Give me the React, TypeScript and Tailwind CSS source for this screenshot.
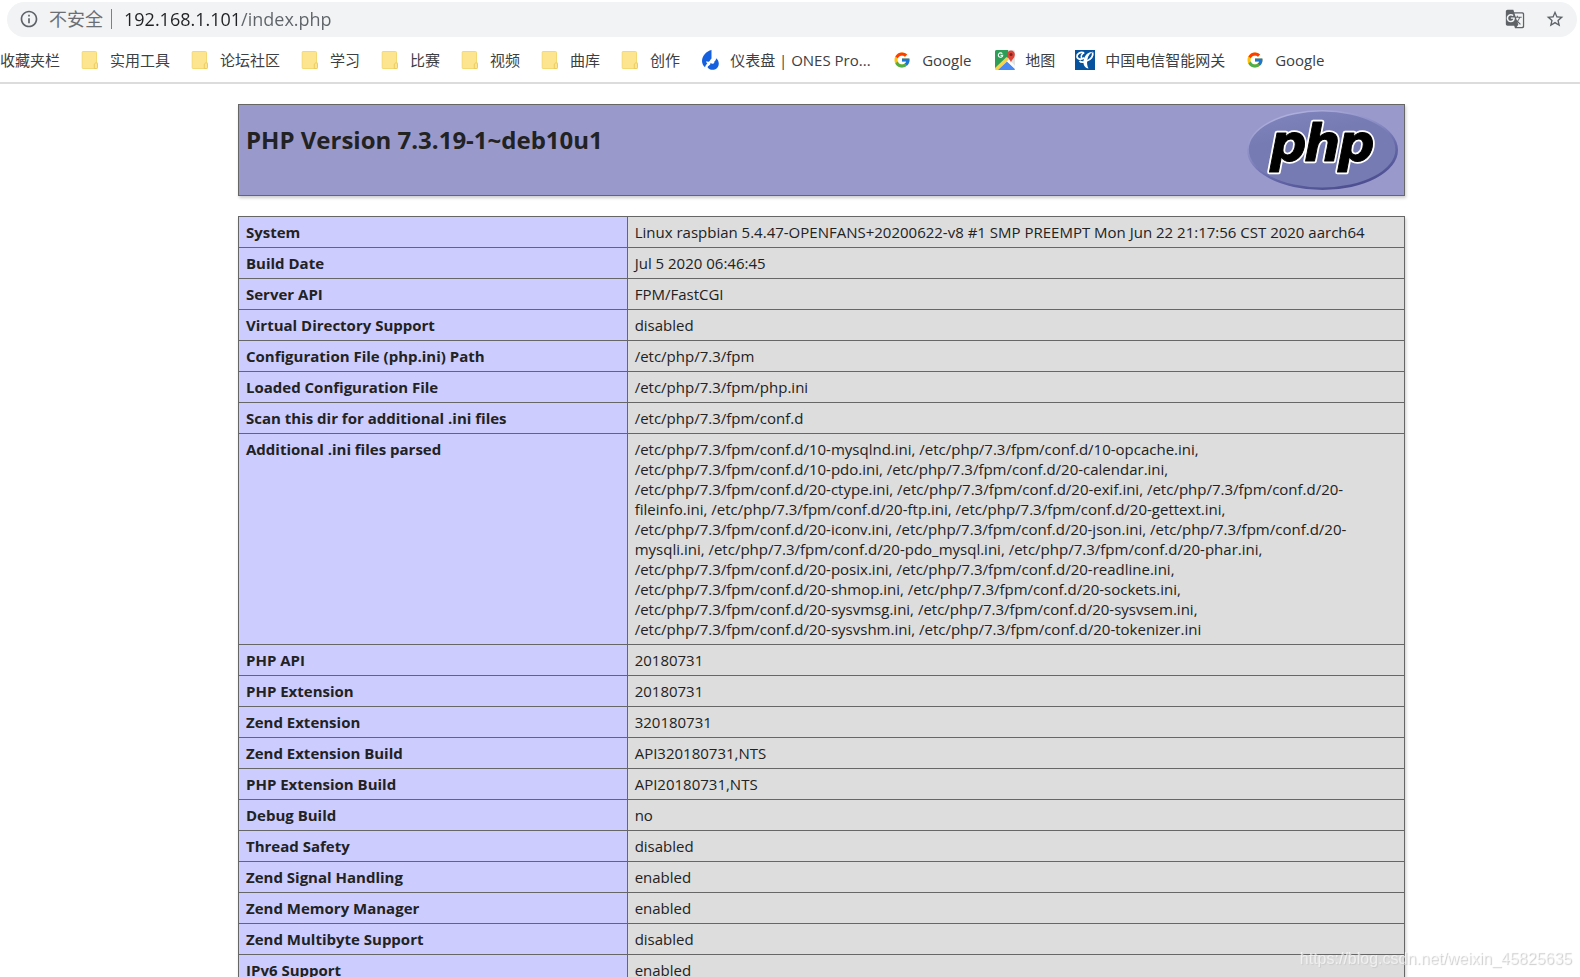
import React from "react";
import { FcGoogle } from "react-icons/fc";
import { MdGTranslate, MdInfoOutline, MdStarBorder } from "react-icons/md";

function FolderIcon() {
  return (
    <svg viewBox="0 0 20 20" className="size-5" aria-hidden="true">
      <path d="M3 1.5h12.5a1 1 0 0 1 1 1V12l1 1.2v4.3a1 1 0 0 1-1 1H3a.8.8 0 0 1-.8-.8V2.300A.8.8 0 0 1 3 1.500z" fill="#fde58f" stroke="#f3d873" strokeWidth="1" />
      <path d="M14.300 18.500v-4.500l1.800-1.500 1.400 1.300v3.700a1 1 0 0 1-1 1z" fill="#fde58f" stroke="#e9c95c" strokeWidth=".9" />
    </svg>
  );
}

function OnesIcon() {
  return (
    <svg viewBox="0 0 20 20" className="size-5" aria-hidden="true">
      <path d="M11.500 0C6.500 1.300 2 5.500 2 11c0 2.500 1.200 4.800 3 6.300.4-1.700 1-3 2.500-3.600-1-.5-1.400-1.500-1-2.700.7.800 1.700.9 2.600.4 1.300-.7 1.200-2.200 2.400-3z" fill="#1560df" />
      <path d="M8 18c1.600 1.600 3.800 2.100 6 1.700 3-.5 4.800-3 4.800-5.900 0-2.300-1-4.500-2.800-5.600.1 1.500-.5 2.700-1.700 3.200.3 1-.2 2-1.300 2.300-1 .2-1.900-.2-2.400-.9-.2 1.500-.3 2.200-1.800 2.900-.8.400-1.500 1.300-.8 2.300z" fill="#1560df" />
    </svg>
  );
}

function MapsIcon() {
  return (
    <svg viewBox="0 0 20 20" className="size-5" aria-hidden="true">
      <rect width="20" height="20" rx="1.500" fill="#e4e4e2" />
      <path d="M1.500 0H13l1 6L2 19.500l-2-1V1.500A1.500 1.500 0 0 1 1.500 0z" fill="#2d9d57" />
      <path d="M0 18 11.500 7l2.300 2.300L3 20H1.500A1.500 1.500 0 0 1 0 18.500z" fill="#fbd34b" />
      <path d="M3 20l9-8.500 8 7.500a1.300 1.300 0 0 1-1.500 1z" fill="#4a89f3" />
      <path d="M12 11.500l2-2 6 6V19z" fill="#fff" opacity=".85" />
      <path d="M16 12.500c-.4-2.800-3.800-4.300-3.800-8A3.900 3.900 0 0 1 16 .4a3.900 3.900 0 0 1 3.800 4.100c0 3.700-3.400 5.200-3.800 8z" fill="#db4437" />
      <circle cx="16" cy="4.500" r="1.500" fill="#7b231e" />
      <path d="M7.300 3.800a2.200 2.200 0 1 0 .4 1.600H5.600" fill="none" stroke="#fff" strokeWidth="1.100" />
    </svg>
  );
}

function TelecomIcon() {
  return (
    <svg viewBox="0 0 20 20" className="size-5" aria-hidden="true">
      <rect width="20" height="20" fill="#07529e" />
      <path d="M9 2.800C5 1.600 1.700 4 2 6.700c.3 2.700 4 3.200 7 1" fill="none" stroke="#fff" strokeWidth="1.700" />
      <path d="M9.300 2.600c-2.300 1.200-3.500 3.400-2.800 5.600" fill="none" stroke="#fff" strokeWidth="1.500" />
      <path d="M18.300 1.800c-2.800 1-5.300 3.700-6 8-.5 3-.2 6.300 1.200 8.700-3.500-.3-5.500-3.500-5-7.700C9.100 5.500 13.500 1.500 18.300 1.800z" fill="#fff" />
      <path d="M17.600 2.400c1 3.600-1.600 7.300-6 8.600M4.500 10.800c1 1.200 2.800 1.600 4.500 1.100" fill="none" stroke="#fff" strokeWidth="1.800" />
    </svg>
  );
}

function GoogleIcon() {
  return (
    <span className="flex size-5 items-center justify-center">
      <FcGoogle className="size-[18px]" aria-hidden="true" />
    </span>
  );
}

function PhpLogo() {
  return (
    <svg viewBox="0 0 151 80" className="h-20 w-[151px] shrink-0" role="img" aria-label="PHP logo">
      <defs>
        <linearGradient id="rim" x1="0.250" y1="0" x2="0.750" y2="1">
          <stop offset="0" stopColor="#b4b5e0" />
          <stop offset="0.350" stopColor="#8c8fc6" />
          <stop offset="0.650" stopColor="#6467a8" />
          <stop offset="1" stopColor="#484a8c" />
        </linearGradient>
        <linearGradient id="face" x1="0.300" y1="0" x2="0.700" y2="1">
          <stop offset="0" stopColor="#7f83bc" />
          <stop offset="0.300" stopColor="#777bb3" />
          <stop offset="1" stopColor="#777bb3" />
        </linearGradient>
      </defs>
      <ellipse cx="75.500" cy="40" rx="75.500" ry="40" fill="url(#rim)" />
      <ellipse cx="75.100" cy="39.500" rx="73.300" ry="38" fill="url(#face)" />
      <g fontFamily="'DejaVu Sans', sans-serif" fontWeight="700" fontStyle="italic" fontSize="51" strokeLinejoin="round">
        <text id="wordmark" x="23 57 91" y="51" fill="#fff" stroke="#fff" strokeWidth="4.500">php</text>
        <text x="23 57 91" y="51" fill="#000" stroke="#000" strokeWidth="1" aria-hidden="true">php</text>
      </g>
    </svg>
  );
}

const bookmarks: { label: string; Icon: () => React.JSX.Element; width?: string }[] = [
  { label: "实用工具", Icon: FolderIcon },
  { label: "论坛社区", Icon: FolderIcon },
  { label: "学习", Icon: FolderIcon },
  { label: "比赛", Icon: FolderIcon },
  { label: "视频", Icon: FolderIcon },
  { label: "曲库", Icon: FolderIcon },
  { label: "创作", Icon: FolderIcon },
  { label: "仪表盘 | ONES Pro...", Icon: OnesIcon, width: "min-w-[142px]" },
  { label: "Google", Icon: GoogleIcon, width: "min-w-[53px]" },
  { label: "地图", Icon: MapsIcon },
  { label: "中国电信智能网关", Icon: TelecomIcon },
  { label: "Google", Icon: GoogleIcon, width: "min-w-[53px]" },
];

const iniFiles = [
  "/etc/php/7.3/fpm/conf.d/10-mysqlnd.ini, /etc/php/7.3/fpm/conf.d/10-opcache.ini,",
  "/etc/php/7.3/fpm/conf.d/10-pdo.ini, /etc/php/7.3/fpm/conf.d/20-calendar.ini,",
  "/etc/php/7.3/fpm/conf.d/20-ctype.ini, /etc/php/7.3/fpm/conf.d/20-exif.ini, /etc/php/7.3/fpm/conf.d/20-",
  "fileinfo.ini, /etc/php/7.3/fpm/conf.d/20-ftp.ini, /etc/php/7.3/fpm/conf.d/20-gettext.ini,",
  "/etc/php/7.3/fpm/conf.d/20-iconv.ini, /etc/php/7.3/fpm/conf.d/20-json.ini, /etc/php/7.3/fpm/conf.d/20-",
  "mysqli.ini, /etc/php/7.3/fpm/conf.d/20-pdo_mysql.ini, /etc/php/7.3/fpm/conf.d/20-phar.ini,",
  "/etc/php/7.3/fpm/conf.d/20-posix.ini, /etc/php/7.3/fpm/conf.d/20-readline.ini,",
  "/etc/php/7.3/fpm/conf.d/20-shmop.ini, /etc/php/7.3/fpm/conf.d/20-sockets.ini,",
  "/etc/php/7.3/fpm/conf.d/20-sysvmsg.ini, /etc/php/7.3/fpm/conf.d/20-sysvsem.ini,",
  "/etc/php/7.3/fpm/conf.d/20-sysvshm.ini, /etc/php/7.3/fpm/conf.d/20-tokenizer.ini",
].join("\n");

const rows: [string, string][] = [
  ["System", "Linux raspbian 5.4.47-OPENFANS+20200622-v8 #1 SMP PREEMPT Mon Jun 22 21:17:56 CST 2020 aarch64"],
  ["Build Date", "Jul 5 2020 06:46:45"],
  ["Server API", "FPM/FastCGI"],
  ["Virtual Directory Support", "disabled"],
  ["Configuration File (php.ini) Path", "/etc/php/7.3/fpm"],
  ["Loaded Configuration File", "/etc/php/7.3/fpm/php.ini"],
  ["Scan this dir for additional .ini files", "/etc/php/7.3/fpm/conf.d"],
  ["Additional .ini files parsed", iniFiles],
  ["PHP API", "20180731"],
  ["PHP Extension", "20180731"],
  ["Zend Extension", "320180731"],
  ["Zend Extension Build", "API320180731,NTS"],
  ["PHP Extension Build", "API20180731,NTS"],
  ["Debug Build", "no"],
  ["Thread Safety", "disabled"],
  ["Zend Signal Handling", "enabled"],
  ["Zend Memory Manager", "enabled"],
  ["Zend Multibyte Support", "disabled"],
  ["IPv6 Support", "enabled"],
];

function AddressBar() {
  return (
    <div className="pt-0.5 pr-[3px] pl-[7px]">
      <div className="flex h-[35px] items-center rounded-full bg-[#f1f3f4] px-3 pb-0.5 text-[#5f6368]">
        <button type="button" className="flex items-center text-lg leading-6" aria-label="查看网站信息">
          <MdInfoOutline className="size-5" aria-hidden="true" />
          <span className="ml-2.5 text-[#6b6f73]">不安全</span>
        </button>
        <span className="mx-2 h-5 w-px bg-[#7d8084]" />
        <input
          aria-label="地址"
          defaultValue="192.168.1.101/index.php"
          className="ml-1 min-w-0 flex-1 bg-linear-to-r from-[#202124] from-[117px] to-[#5f6368] to-[117px] bg-clip-text text-lg leading-6 text-transparent caret-black outline-none"
        />
        <button type="button" aria-label="翻译此页" className="mr-5">
          <MdGTranslate className="size-5" aria-hidden="true" />
        </button>
        <button type="button" aria-label="为此页添加书签">
          <MdStarBorder className="size-5" aria-hidden="true" />
        </button>
      </div>
    </div>
  );
}

function BookmarksBar() {
  return (
    <nav aria-label="书签" className="flex h-[47px] items-center gap-5 overflow-hidden border-b-2 border-[#dcdcdc] text-[15px] leading-5 whitespace-nowrap text-[#3c4043]">
      <span>收藏夹栏</span>
      {bookmarks.map(({ label, Icon, width }, i) => (
        <a key={i} href="#" className="flex items-center gap-2.5">
          <Icon />
          <span className={width}>{label}</span>
        </a>
      ))}
    </nav>
  );
}

export default function App() {
  return (
    <div className="flex h-screen flex-col bg-white font-['Open_Sans','Noto_Sans_CJK_SC',sans-serif]">
      <header>
        <AddressBar />
        <BookmarksBar />
      </header>
      <main className="min-h-0 flex-1 overflow-y-auto pt-5 pl-[63px] text-[15px] leading-5 text-[#222] [scrollbar-width:none]">
        <div className="mx-auto flex w-full max-w-[1167px] flex-col gap-5">
          <div className="flex items-start justify-between border border-[#666] bg-[#9999cc] py-[5px] pr-1.5 pl-[7px] shadow-[1px_2px_3px_#ccc]">
            <h1 className="pt-3 text-2xl leading-9 font-bold">PHP Version 7.3.19-1~deb10u1</h1>
            <a href="http://www.php.net/"><PhpLogo /></a>
          </div>
          <table className="w-full table-fixed border-collapse shadow-[1px_2px_3px_#ccc]">
            <tbody>
              {rows.map(([name, value]) => (
                <tr key={name}>
                  <th scope="row" className="w-1/3 border border-[#666] bg-[#ccccff] px-[7px] py-[5px] text-left align-top font-bold">
                    {name}
                  </th>
                  <td className="border border-[#666] bg-[#dddddd] px-[7px] py-[5px] align-top whitespace-pre-line">{value}</td>
                </tr>
              ))}
            </tbody>
          </table>
        </div>
      </main>
      <p className="fixed right-2 bottom-2 font-['Liberation_Sans',sans-serif] text-base leading-5 text-white/60 [text-shadow:1px_1px_1px_#ccc]">
        https://blog.csdn.net/weixin_45825635
      </p>
    </div>
  );
}
